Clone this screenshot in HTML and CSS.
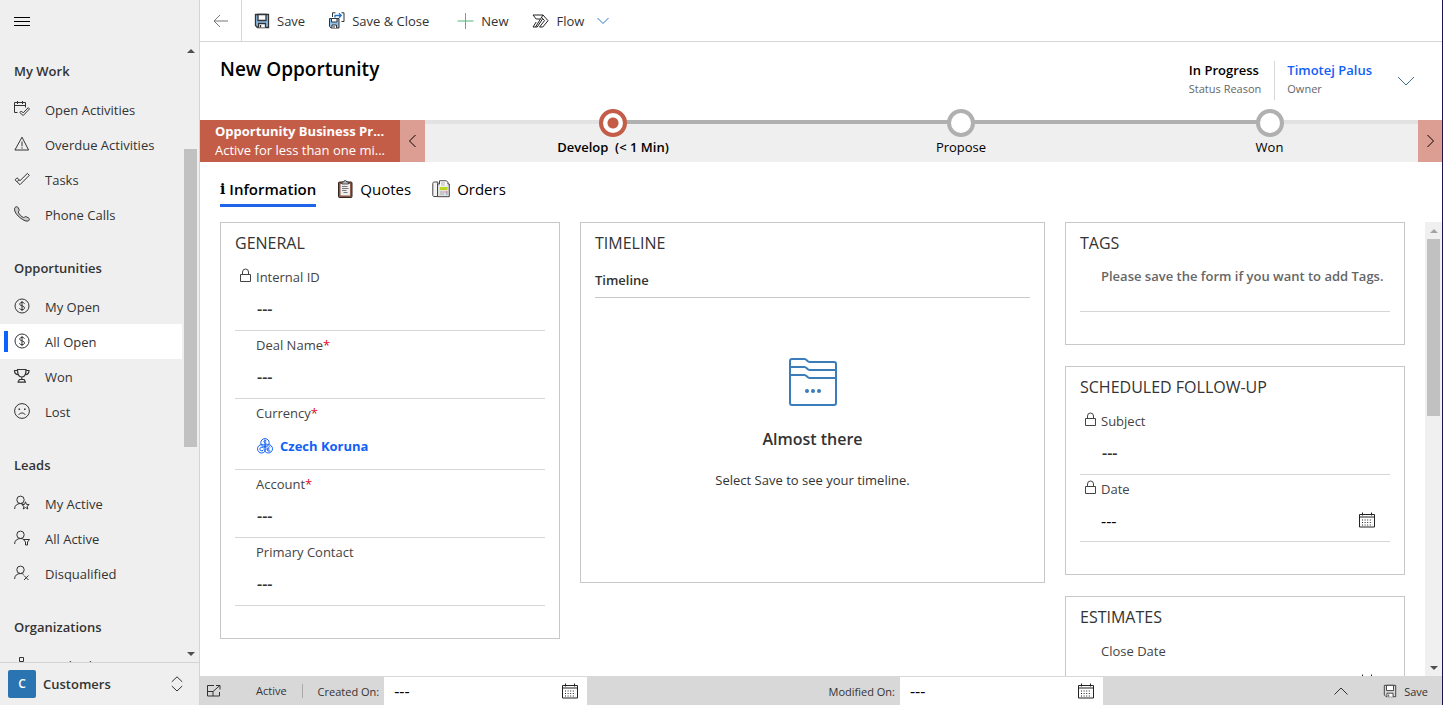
FILE: index.html
```html
<!DOCTYPE html>
<html lang="en">
<head>
<meta charset="utf-8">
<title>New Opportunity</title>
<link rel="stylesheet" href="styles.css">
</head>
<body>
<svg class="defs" aria-hidden="true">
  <symbol id="i-dollar" viewBox="0 0 16 16"><circle cx="8" cy="8" r="7"/><path d="M8 3v10M10.5 5.6C10 4.7 9 4.4 8 4.4c-1.4 0-2.3.7-2.3 1.7C5.700 8.500 10.500 7.300 10.500 9.900c0 1.100-1.100 1.800-2.500 1.800-1.200 0-2.200-.5-2.600-1.400"/></symbol>
  <symbol id="i-person" viewBox="0 0 16 16"><circle cx="6.500" cy="4.800" r="3.700"/><path d="M.6 14c0-3.300 2.400-5.500 5.900-5.500 1.300 0 2.300.3 3.200.9"/></symbol>
  <symbol id="i-lock" viewBox="0 0 12 15"><path d="M.5 6.500h10v7H.5zM2.500 6.500V4a3 3 0 0 1 6 0v2.500"/></symbol>
  <symbol id="i-cal" viewBox="0 0 16 16"><path d="M.5 2.500h15v12.500H.5zM.5 5h15M3.500 .5v3M12.500 .5v3"/><path d="M3 8h10.500M3 10.500h10.500M3 13h10.500" stroke-dasharray="1 1.600"/></symbol>
  <symbol id="i-floppy" viewBox="0 0 16 16"><path d="M1.500 1.500h13v13h-11l-2-2z"/><path class="paper" d="M4 1.500h8v6H4z"/><path class="paper" d="M4.500 14.500v-4h7v4M6.500 12v2.500"/></symbol>
</svg>
<div class="app">
  <aside class="sidebar">
    <button class="menu-btn" aria-label="Toggle navigation"><svg width="16" height="10" viewBox="0 0 16 10"><path d="M0 .5h16M0 4.500h16M0 8.500h16"/></svg></button>
    <div class="nav-wrap">
      <nav class="nav">
        <h2>My Work</h2>
        <a href="#"><svg viewBox="0 0 16 16"><path d="M3.500 11.500h-3v-10h11v5M.5 4.500h11M3.500 0v3M8.500 0v3"/><path d="M5.800 11.500l1.500-1.500 1.900 1.900 5-5.200 1.300 1.300-6.300 6.500z"/></svg>Open Activities</a>
        <a href="#"><svg viewBox="0 0 16 16"><path d="M8 1.200L14.600 14H.9zM8 5.500v4.800M8 11.300v1.400"/></svg>Overdue Activities</a>
        <a href="#"><svg viewBox="0 0 16 16"><path d="M1 8.800l2-2L6 9.700l7.400-7.300 1.900 1.900L6 13.700z"/><path d="M3 10.800l2-2"/></svg>Tasks</a>
        <a href="#"><svg viewBox="0 0 16 16"><path class="phone" d="M1 1.600C2 .4 3.400.4 4.100 1.600l1 2c.5 1-.7 1.700-.8 2.400C4.600 7.700 7.700 11.100 9.500 11.500c.9.200 1.500-1.300 2.600-.8l2.500 1.300c1.100.6 1 2-.1 2.800C11.500 17 .5 8.900.5 3.300c0-.7.2-1.300.5-1.700z"/></svg>Phone Calls</a>
        <h2>Opportunities</h2>
        <a href="#"><svg><use href="#i-dollar"/></svg>My Open</a>
        <a href="#" class="current" aria-current="page"><svg><use href="#i-dollar"/></svg>All Open</a>
        <a href="#"><svg viewBox="0 0 16 16"><path stroke-width="1.200" d="M3.500 1.500h8.500c0 4-.7 7.500-4.200 7.500S3.500 5.500 3.500 1.500zM3.500 2.500h-3c0 2.500 1 4 3.700 4.200M12 2.500h3c0 2.500-1 4-3.700 4.200M7.800 9v2.500M5 11.500h5.500M3.500 14.200H12M5.500 11.500L4 14M10 11.500l1.500 2.500"/></svg>Won</a>
        <a href="#"><svg viewBox="0 0 16 16"><circle cx="8" cy="8" r="7.400"/><path d="M4.700 11.800c.8-1.300 2-1.800 3.300-1.800s2.500.5 3.300 1.800"/><path stroke-width="1.600" d="M4.500 6.200h1.600M10 6.200h1.600"/></svg>Lost</a>
        <h2>Leads</h2>
        <a href="#"><svg viewBox="0 0 16 16"><use href="#i-person"/><path d="M11.500 6.800l1 2.600 2.700.1-2.100 1.800.7 2.700-2.300-1.500L9.200 14l.8-2.700-2.200-1.700 2.700-.2z"/></svg>My Active</a>
        <a href="#"><svg viewBox="0 0 16 16"><use href="#i-person"/><path d="M9.500 9.500h6l-2 2.500v3h-2v-3z"/></svg>All Active</a>
        <a href="#"><svg viewBox="0 0 16 16"><use href="#i-person"/><path d="M10 10.500l4.500 4.500M14.500 10.500L10 15"/></svg>Disqualified</a>
        <h2>Organizations</h2>
        <a href="#"><svg viewBox="0 0 16 16"><path d="M5.500.5h4v4h-4zM7.500 4.500v4M1 12V8.500h13V12"/></svg>Medical</a>
      </nav>
      <div class="scroll nav-scroll" aria-hidden="true"><i class="up"></i><b></b><i class="down"></i></div>
    </div>
    <button class="area"><span class="badge">C</span><span class="area-name">Customers</span><svg width="12" height="16" viewBox="0 0 12 16"><path d="M.8 5.800L6 .8l5.200 5M.8 10L6 15l5.200-5"/></svg></button>
  </aside>

  <main class="main">
    <div class="commands">
      <button class="back" aria-label="Back"><svg width="16" height="14" viewBox="0 0 16 14"><path d="M15 7H1M7 1L1 7l6 6"/></svg></button>
      <button class="cmd"><svg class="disk" width="16" height="16"><use href="#i-floppy"/></svg>Save</button>
      <button class="cmd"><svg width="16" height="17" viewBox="0 0 16 17"><path class="blue" d="M.5 6.500h9.500v9.500H2L.5 14.500z"/><path class="white" d="M2.500 6.500H8v3.500H2.500zM3 16v-3h4.500v3M5 14v2"/><path d="M3.500 5V.8h3M12.500.8H15v8.700h-2.500"/><path class="arrow" d="M6 5.500v-2h6M10 1.300l2.200 2.200L10 5.700"/></svg>Save &amp; Close</button>
      <button class="cmd"><svg class="plus" width="17" height="16" viewBox="0 0 17 16"><path d="M8.500 0v16M.5 8h16"/></svg>New</button>
      <button class="cmd"><svg class="flow" width="17" height="14" viewBox="0 0 17 14"><path d="M1 1h10l5 5.700-5.200 6.300H7.500l5-6.300L9.500 3.300M1 1l3.200 4H8M11 1L3.500 13H1l3.200-5M3.500 13h1.700L10.500 5"/></svg>Flow<svg class="chev" width="12" height="8" viewBox="0 0 12 8"><path d="M.5 1L6 6.500 11.500 1"/></svg></button>
    </div>

    <header class="head">
      <h1>New Opportunity</h1>
      <div class="facts">
        <div class="fact"><strong>In Progress</strong><span>Status Reason</span></div>
        <div class="fact owner"><a href="#">Timotej Palus</a><span>Owner</span></div>
        <button class="expand" aria-label="Expand header"><svg width="18" height="10" viewBox="0 0 18 10"><path d="M1 1l8 8 8-8"/></svg></button>
      </div>
    </header>

    <section class="process" aria-label="Business process">
      <button class="process-name"><strong>Opportunity Business Pr...</strong><span>Active for less than one mi...</span></button>
      <button class="step" aria-label="Previous stage"><svg width="9" height="14" viewBox="0 0 9 14"><path d="M7.500 1l-6 6 6 6"/></svg></button>
      <div class="stages">
        <button class="stage active"><i></i><span>Develop&nbsp; (&lt; 1 Min)</span></button>
        <button class="stage"><i></i><span>Propose</span></button>
        <button class="stage last"><i></i><span>Won</span></button>
      </div>
      <button class="step next" aria-label="Next stage"><svg width="9" height="14" viewBox="0 0 9 14"><path d="M1.500 1l6 6-6 6"/></svg></button>
    </section>

    <div class="tabs" role="tablist">
      <button role="tab" aria-selected="true" class="tab on"><span class="info">i</span>Information</button>
      <button role="tab" aria-selected="false" class="tab"><svg width="16" height="18" viewBox="0 0 16 18"><rect x="1.500" y="2" width="13.500" height="15.500" rx="1" fill="#8a5a48" stroke="#33231f"/><path d="M3.500 4H13v11.500H3.500z" fill="#eee" stroke="none"/><path d="M5 4V2h1.700a1.500 1.500 0 0 1 3 0h1.700v2z" fill="#bbb" stroke="#333" stroke-width=".8"/><path d="M5 6.500h5.500M5 8.500h6.500M5 10.500h4.500M6.500 12.500h4" stroke="#777"/></svg>Quotes</button>
      <button role="tab" aria-selected="false" class="tab"><svg width="18" height="18" viewBox="0 0 18 18"><path d="M.8 3.500c0-1 .6-1.500 1.500-1.500h3.500v14.500H1.500l-.7-1z" fill="#f4f4f4" stroke="#444"/><path d="M5.500 4h2V.8h7L16 2.500V4h1.300v12.700H5.500z" fill="#e2e2e2" stroke="#444"/><g stroke="none"><path d="M8 1.500h6.500v5H8z" fill="#fff"/><path d="M8 7h7.500v3H8z" fill="#b7d81f"/></g><path d="M9 3h4M9 5h4" stroke="#999" stroke-width=".8"/><path d="M8.500 12h5M8.500 14h4" stroke="#777" stroke-dasharray="1 1"/><path d="M14 12h1.500" stroke="#e35"/><path d="M14 14h1.500" stroke="#38d"/></svg>Orders</button>
    </div>

    <div class="form-wrap">
      <div class="form">
        <section class="card">
          <h3>GENERAL</h3>
          <div class="field"><label for="f-id"><svg class="lock"><use href="#i-lock"/></svg>Internal ID</label><input id="f-id" value="---" readonly></div>
          <div class="field"><label for="f-deal">Deal Name<em>*</em></label><input id="f-deal" value="---"></div>
          <div class="field lookup"><span class="label">Currency<em>*</em></span><a href="#"><svg width="16" height="16" viewBox="0 0 16 16"><circle cx="8" cy="4.800" r="4.200"/><circle cx="4.700" cy="10.800" r="4.200"/><circle cx="11.300" cy="10.800" r="4.200"/><path d="M9.300 3C8 2 6.600 2.800 7 4c.3.900 2 .6 2.200 1.700.2 1.300-1.500 1.500-2.500.7M8 1.500v6.500M6.300 9.500c-2-.9-3.500.2-3.500 1.500s1.500 2.400 3.300 1.400M9.500 11h3M13.300 9c-2-.7-2.600.5-2.500 4h2.700"/></svg>Czech Koruna</a></div>
          <div class="field"><label for="f-acc">Account<em>*</em></label><input id="f-acc" value="---"></div>
          <div class="field"><label for="f-con">Primary Contact</label><input id="f-con" value="---"></div>
        </section>

        <section class="card">
          <h3>TIMELINE</h3>
          <h4>Timeline</h4>
          <div class="empty">
            <svg width="48" height="48" viewBox="0 0 48 48"><path d="M1 3a2 2 0 0 1 2-2h12.500c2 0 3 3 5 3H45a2 2 0 0 1 2 2v39a2 2 0 0 1-2 2H3a2 2 0 0 1-2-2zM1 9h14.500c2 0 3 3 5 3H47M1 17h14.500c2 0 3 3 5 3H47"/><g><circle cx="18" cy="33" r="2"/><circle cx="24" cy="33" r="2"/><circle cx="30" cy="33" r="2"/></g></svg>
            <strong>Almost there</strong>
            <p>Select Save to see your timeline.</p>
          </div>
        </section>

        <div class="column">
          <section class="card">
            <h3>TAGS</h3>
            <p class="note">Please save the form if you want to add Tags.</p>
          </section>
          <section class="card">
            <h3>SCHEDULED FOLLOW-UP</h3>
            <div class="field"><label for="f-sub"><svg class="lock"><use href="#i-lock"/></svg>Subject</label><input id="f-sub" value="---" readonly></div>
            <div class="field date"><label for="f-date"><svg class="lock"><use href="#i-lock"/></svg>Date</label><div class="pick"><input id="f-date" value="---" readonly><button aria-label="Choose date"><svg class="cal"><use href="#i-cal"/></svg></button></div></div>
          </section>
          <section class="card">
            <h3>ESTIMATES</h3>
            <div class="field date"><label for="f-close">Close Date</label><div class="pick"><input id="f-close" value="---"><button aria-label="Choose close date"><svg class="cal"><use href="#i-cal"/></svg></button></div></div>
          </section>
        </div>
      </div>
      <div class="scroll form-scroll" aria-hidden="true"><i class="up"></i><b></b><i class="down"></i></div>
    </div>

    <footer class="status">
      <button class="pop" aria-label="Open in new window"><svg width="14" height="12" viewBox="0 0 14 12"><path d="M7 .5H.5v10.500h12V7M.5 6.500h5.500v4.500M6 6.500L12.500.8M9 .5h4V4.500"/></svg></button>
      <span class="state">Active</span>
      <label class="created" for="s-created">Created On:</label>
      <div class="pick sbox"><input id="s-created" value="---" readonly><button aria-label="Choose created date"><svg class="cal"><use href="#i-cal"/></svg></button></div>
      <span class="grow"></span>
      <label for="s-modified">Modified On:</label>
      <div class="pick sbox"><input id="s-modified" value="---" readonly><button aria-label="Choose modified date"><svg class="cal"><use href="#i-cal"/></svg></button></div>
      <span class="grow end"></span>
      <button class="raise" aria-label="Expand footer"><svg width="14" height="8" viewBox="0 0 14 8"><path d="M.5 7.500L7 1l6.500 6.500"/></svg></button>
      <button class="save2"><svg width="14" height="14"><use href="#i-floppy"/></svg>Save</button>
    </footer>
  </main>
</div>
</body>
</html>
```
FILE: styles.css
```css
* { box-sizing: border-box; }
body { margin: 0; font-family: "Open Sans", "Noto Sans", sans-serif; font-size: 13px; color: #333; background: #fff; }
h1, h2, h3, h4, p { margin: 0; font-size: inherit; font-weight: 400; }
button, input { font: inherit; color: inherit; background: none; border: 0; padding: 0; margin: 0; border-radius: 0; }
a { text-decoration: none; color: inherit; }
em { font-style: normal; color: #e00b1c; }
svg { fill: none; stroke: currentColor; stroke-width: 1; flex: none; display: block; }
.defs { position: absolute; width: 0; height: 0; }

.app { display: flex; height: 100vh; overflow: hidden; border-right: 1px solid #1e1446; }

/* Navigation */
.sidebar { width: 200px; flex: none; display: flex; flex-direction: column; background: #efefef; border-right: 1px solid #d4d4d4; }
.menu-btn { height: 35px; flex: none; padding: 8px 14px 0; text-align: left; color: #000; display: flex; align-items: center; }
.nav-wrap { flex: 1; min-height: 0; display: flex; }
.nav { flex: 1; overflow: hidden; }
.nav h2 { padding: 26px 14px 11px; line-height: 20px; font-weight: 600; }
.nav a { display: flex; align-items: center; height: 35px; padding-left: 14px; gap: 15px; }
.nav a svg { width: 16px; height: 16px; margin-bottom: 2px; }
.nav a.current { background: #fff; padding-left: 0; }
.nav a.current::before { content: ""; width: 4px; height: 21px; margin: 0 -9px 0 4px; background: #0a62ff; }
.phone { fill: #ccc; }
.area { display: flex; align-items: center; height: 43px; padding: 0 16px 0 8px; border-top: 1px solid #d4d4d4; text-align: left; font-weight: 600; }
.badge { width: 28px; height: 28px; line-height: 27px; border-radius: 2px; background: #2a74b2; color: #fff; text-align: center; font-size: 12px; margin-right: 7px; }
.area-name { flex: 1; }

/* Scroll bars */
.scroll { display: flex; flex-direction: column; align-items: center; flex: none; width: 17px; }
.scroll i { height: 17px; display: flex; flex: none; align-items: center; justify-content: center; }
.scroll i::before { content: ""; border: 4px solid transparent; }
.scroll .up::before { border-top: 0; border-bottom-color: #505050; }
.scroll .down::before { border-bottom: 0; border-top-color: #505050; }
.scroll .down { margin-top: auto; }
.scroll b { width: 13px; background: #c1c1c1; }
.nav-scroll { margin-top: 7px; }
.nav-scroll b { height: 48%; margin-top: 90px; }
.form-scroll { background: #f0f0f0; }
.form-scroll b { height: 39%; }
.form-scroll .up::before { border-bottom-color: #a3a3a3; }

/* Command bar */
.main { flex: 1; min-width: 0; display: flex; flex-direction: column; }
.commands { display: flex; height: 42px; flex: none; border-bottom: 1px solid #d6d6d6; }
.back { width: 42px; border-right: 1px solid #d6d6d6; display: grid; place-items: center; color: #767676; }
.cmd { display: flex; align-items: center; gap: 7px; padding: 0 12px; }
.disk { stroke: #333; fill: #8fc1ec; stroke-width: 1.300; }
.paper { fill: #fff; }
.blue { fill: #8fc1ec; }
.white { fill: #fff; }
.arrow { stroke: #2473c4; stroke-width: 1.300; }
.plus { stroke: #4fb878; margin-left: 4px; }
.flow { stroke: #222; }
.chev { stroke: #2a78c4; margin-left: 6px; }

/* Record header */
.head { display: flex; justify-content: space-between; height: 78px; flex: none; padding: 0 27px 0 20px; color: #000; }
.head h1 { font-size: 19px; font-weight: 600; line-height: 54px; }
.facts { display: flex; padding-top: 19px; }
.fact { display: flex; flex-direction: column; padding-right: 13px; height: 39px; line-height: 19px; white-space: nowrap; }
.fact strong { font-weight: 600; }
.fact a { font-weight: 600; color: #1160f7; }
.fact span { font-size: 11px; color: #666; line-height: 18px; }
.owner { border-left: 1px solid #d6d6d6; padding-left: 12px; padding-right: 25px; }
.expand { color: #3b7189; height: 39px; }

/* Business process */
.process { display: flex; height: 42px; flex: none; background: #efefef; color: #000; }
.process-name { width: 200px; padding: 0 8px 0 15px; background: #c45d48; color: #fff; text-align: left; line-height: 19px; white-space: nowrap; }
.process-name strong, .process-name span { display: block; }
.process-name strong { font-weight: 700; }
.step { width: 25px; background: #dc9e92; display: grid; place-items: center; flex: none; }
.next { width: 24px; }
.stages { flex: 1; display: grid; grid-template-columns: 376fr 320fr 297fr; }
.stage { display: flex; flex-direction: column; align-items: center; background: linear-gradient(#b0b0b0, #b0b0b0) 0 0 / 100% 4px no-repeat; }
.stage.active { font-weight: 600; background: linear-gradient(90deg, #e2e2e2 50%, #b0b0b0 50%) 0 0 / 100% 4px no-repeat; }
.stage.last { background: linear-gradient(90deg, #b0b0b0 50%, #e2e2e2 50%) 0 0 / 100% 4px no-repeat; }
.stage i { width: 28px; height: 28px; flex: none; margin-top: -11px; border: 4px solid #b0b0b0; border-radius: 50%; background: #fff; }
.stage.active i { border-color: #c45d48; background: radial-gradient(circle, #c45d48 5px, #fff 6px); }
.stage span { line-height: 20px; }

/* Tabs */
.tabs { display: flex; gap: 21px; height: 60px; flex: none; padding: 12px 20px 15px; color: #000; font-size: 15px; }
.tab { display: flex; align-items: center; gap: 7px; height: 33px; border-bottom: 3px solid transparent; }
.tab.on { font-weight: 600; border-color: #1f64e8; gap: 4px; }
.info { font-family: "DejaVu Serif", serif; font-weight: 700; font-size: 14px; }

/* Form */
.form-wrap { flex: 1; min-height: 0; display: flex; }
.form { flex: 1; overflow: hidden; padding: 0 20px; display: grid; grid-template-columns: 340fr 465fr 340fr; gap: 20px; align-items: start; }
.card { border: 1px solid #c8c8c8; padding: 0 14px 32px; min-width: 0; }
.column { display: grid; gap: 21px; min-width: 0; }
.card h3 { font-size: 16px; line-height: 40px; }
.card h4 { font-weight: 600; line-height: 34px; border-bottom: 1px solid #c8c8c8; }
.field { border-bottom: 1px solid #d6d6d6; padding-bottom: 4px; }
.field label, .label { display: flex; line-height: 28px; padding-left: 21px; color: #444; }
.lock { width: 12px; height: 15px; margin: 5px 4px 0 -16px; }
.field input { display: block; width: 100%; height: 35px; padding-left: 22px; font-weight: 600; font-size: 16px; }
.lookup a { display: flex; align-items: center; gap: 7px; height: 38px; padding-left: 22px; color: #1160f7; font-weight: 700; }
.pick { display: flex; align-items: center; justify-content: space-between; }
.pick input { flex: 1; min-width: 0; }
.field.date { padding-bottom: 3px; }
.field.date input { font-weight: 400; color: #000; padding-left: 21px; }
.pick button { margin-right: 15px; color: #222; }
.cal { width: 16px; height: 16px; }
.field .cal { margin-bottom: 2px; }
.note { height: 49px; line-height: 27px; padding-left: 21px; border-bottom: 1px solid #d6d6d6; font-weight: 600; color: #666; white-space: nowrap; }
.empty { text-align: center; padding: 60px 0; }
.empty svg { margin: 0 auto; stroke: #3b7cba; stroke-width: 2; }
.empty g { fill: #3b7cba; stroke: none; }
.empty strong { display: block; font-size: 16px; font-weight: 600; line-height: 24px; margin: 21px 0 19px; }
.empty p { line-height: 20px; }

/* Status bar */
.status { display: flex; align-items: center; height: 29px; flex: none; background: #d8d8d8; font-size: 11px; padding: 1px 14px 0 7px; }
.state { margin-left: 35px; padding-right: 15px; border-right: 1px solid #aaa; line-height: 14px; }
.created { margin-left: 15px; }
.status label { margin-right: 5px; font-size: 11px; }
.sbox { width: 203px; height: 28px; background: #fff; color: #000; font-size: 16px; }
.sbox input { padding-left: 10px; height: 28px; }
.sbox button { margin-right: 9px; }
.grow { flex: 240; }
.end { flex: 230; }
.raise { margin-right: 35px; }
.save2 { display: flex; align-items: center; gap: 7px; }
.save2 .paper, .save2 svg { fill: none; }
.save2 svg { --paper: none; }
```
